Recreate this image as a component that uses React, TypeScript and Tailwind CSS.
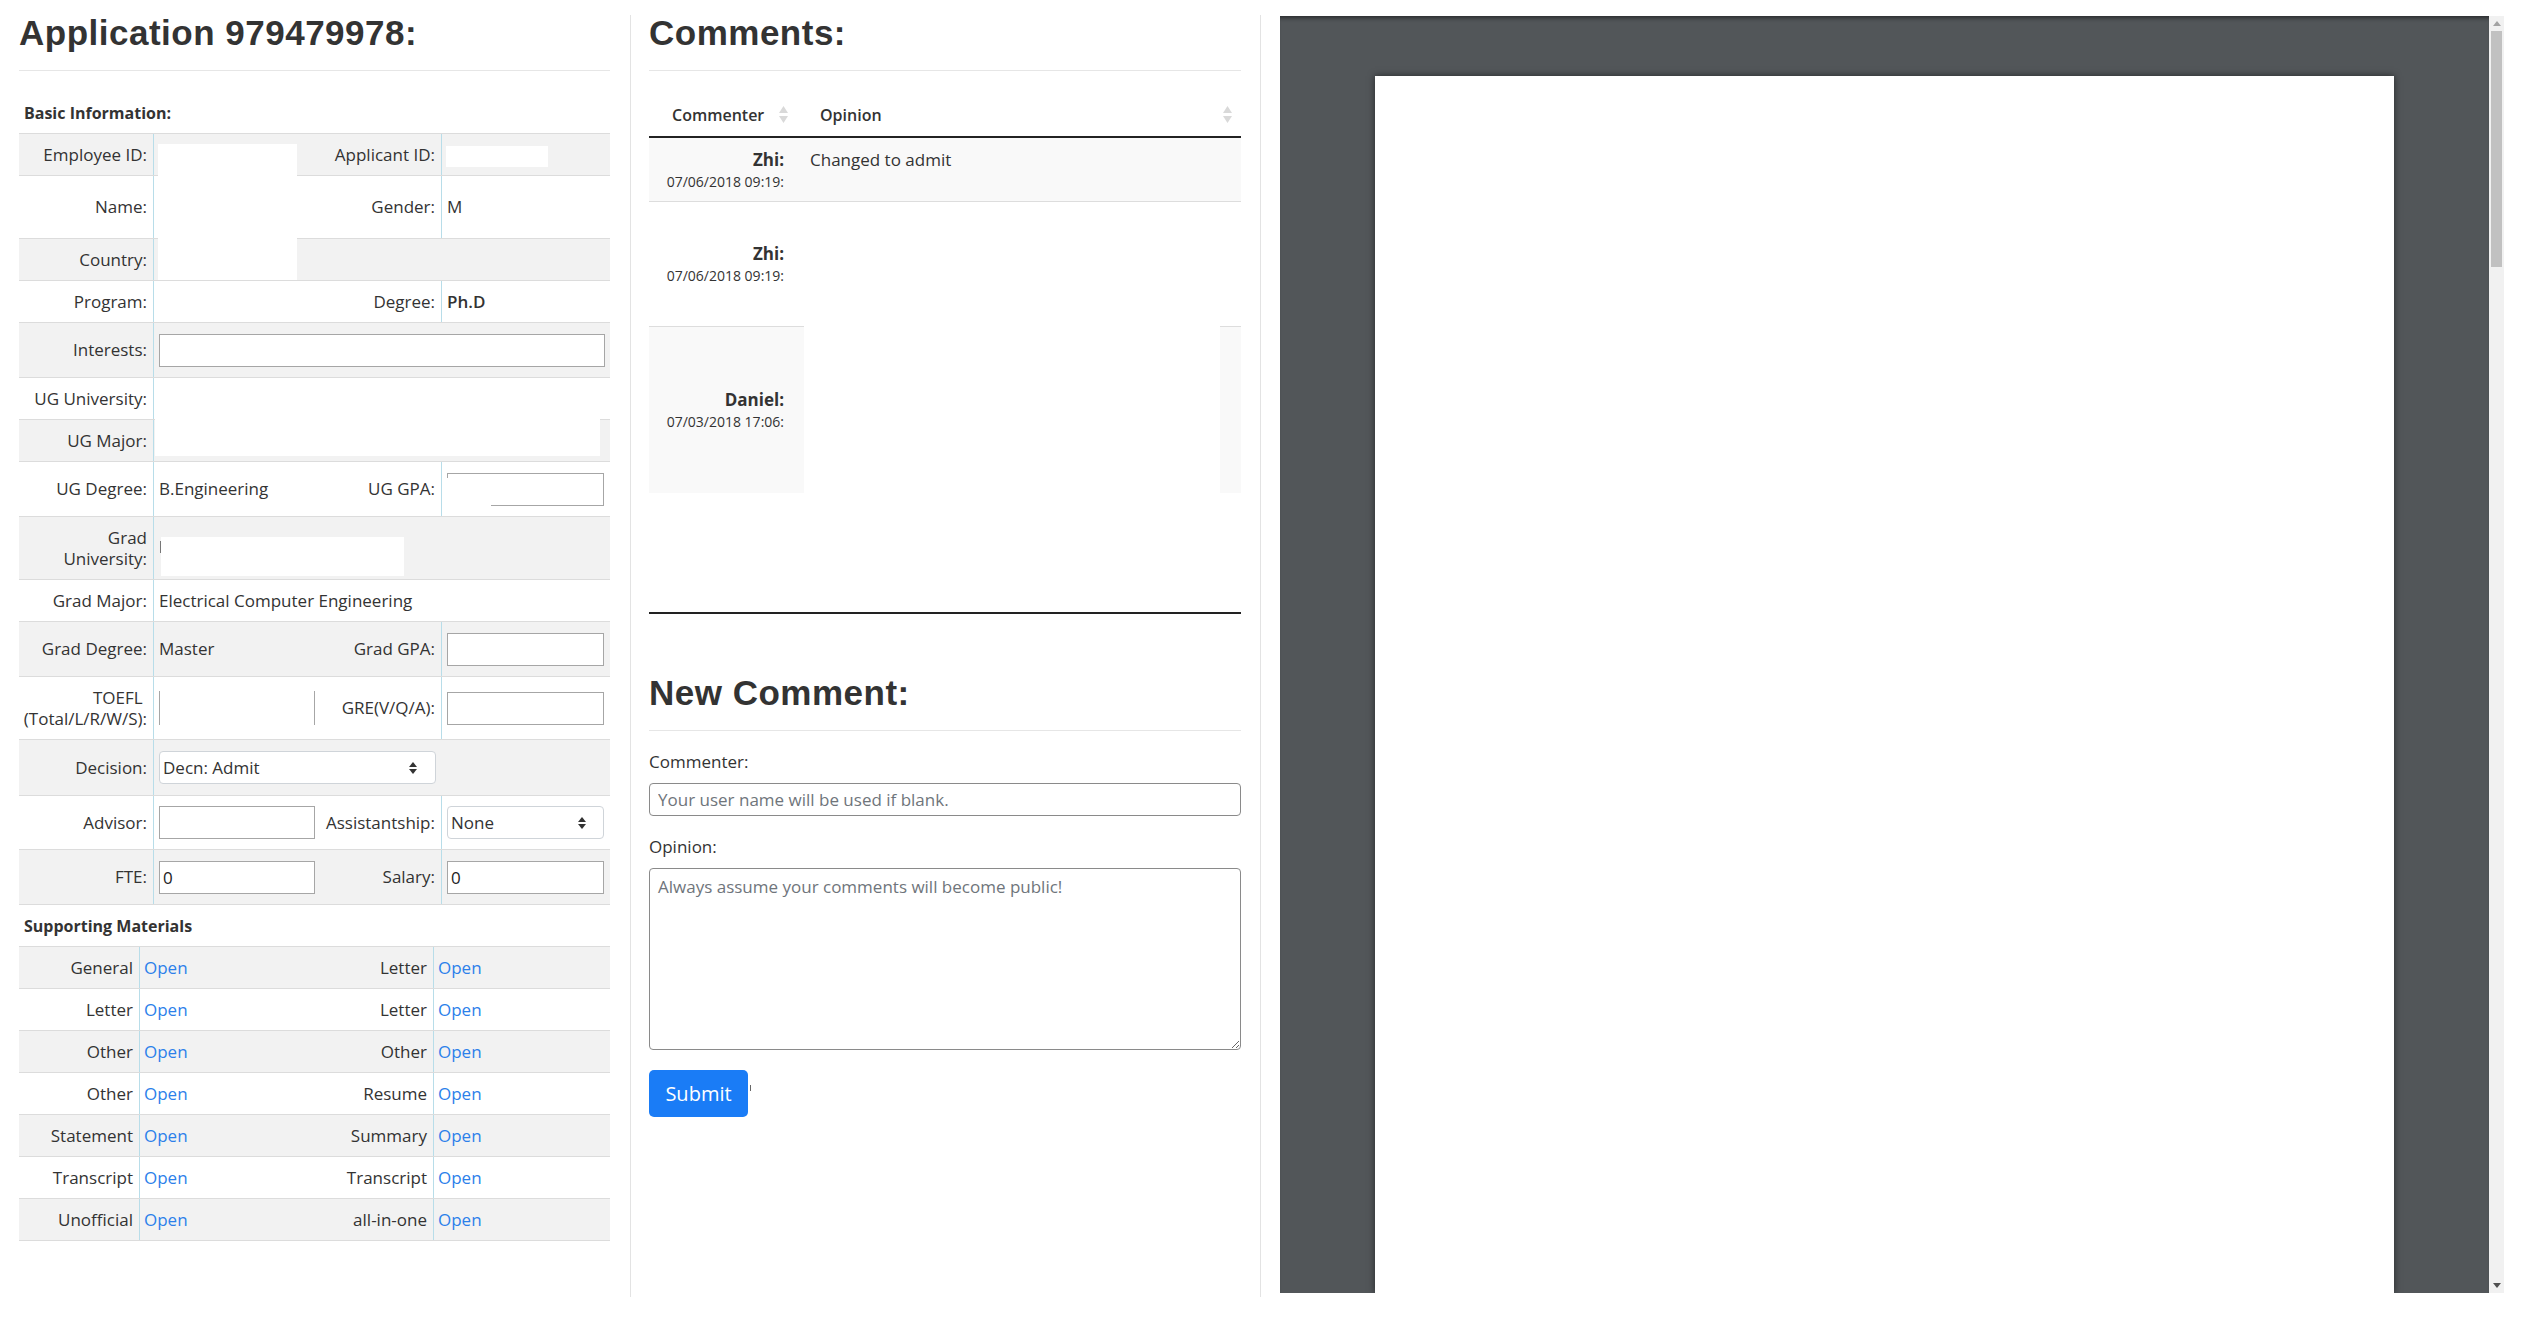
import clsx from "clsx";
import type { ReactNode } from "react";

// Application review screen — info table, comments, pdf preview

const infoCols = "grid grid-cols-[134px_169px_119px_169px] border-t border-[#dcdcdc]";
const docCols = "grid grid-cols-[120px_174px_120px_177px] border-t border-[#dcdcdc]";

function Row({ h, gray, last, cols = infoCols, children }: { h: string; gray?: boolean; last?: boolean; cols?: string; children: ReactNode }) {
  return <div className={clsx(cols, h, gray && "bg-[#f2f2f2]", last && "border-b")}>{children}</div>;
}

function Lbl({ children, two }: { children: ReactNode; two?: boolean }) {
  return (
    <div className={clsx("flex items-center justify-end pr-[6px] text-right", two && "leading-[21px]")}>
      <span>{children}</span>
    </div>
  );
}

function Val({ children, span }: { children?: ReactNode; span?: boolean }) {
  return <div className={clsx("flex items-center border-l border-[#b8dde9] pl-[5px]", span && "col-span-3")}>{children}</div>;
}

function Box({ w, value = "" }: { w: string; value?: string }) {
  return <input readOnly value={value} className={clsx("h-[33px] border border-[#a6a6a6] bg-white px-[3px] text-[17px] text-[#222] outline-none", w)} />;
}

function Arrows() {
  return (
    <svg width="8" height="12" viewBox="0 0 8 12" className="fill-[#333]">
      <path d="M0 5 L4 0 L8 5 Z" />
      <path d="M0 7 L4 12 L8 7 Z" />
    </svg>
  );
}

function Select({ w, value, pr }: { w: string; value: string; pr: string }) {
  return (
    <div className={clsx("flex h-[33px] items-center justify-between rounded-[4px] border border-[#cfd4d9] bg-white pl-[3px]", w, pr)}>
      <span>{value}</span>
      <Arrows />
    </div>
  );
}

function Doc({ name }: { name: string }) {
  return (
    <>
      <Lbl>{name}</Lbl>
      <div className="flex items-center border-l border-[#b8dde9] pl-[4px]">
        <a href="#" className="text-[#2c80ea]">Open</a>
      </div>
    </>
  );
}

function Title({ children, className }: { children: ReactNode; className?: string }) {
  return (
    <h1 className={clsx("font-['Liberation_Sans',Arial,sans-serif] text-[35px] font-bold leading-[36px] tracking-[0.5px] text-[#333]", className)}>
      {children}
    </h1>
  );
}

function ApplicationPanel() {
  return (
    <div className="mt-[15px] h-[1282px] w-[631px] shrink-0 border-r border-[#e3e3e3] pl-[19px] pr-[20px]">
      <Title>Application 979479978:</Title>
      <hr className="mt-[19px] border-t border-[#e6e6e6]" />
      <div className="mt-[30px] pl-[5px] text-[16px] font-bold">Basic Information:</div>

      <div className="relative mt-[8px]">
        <Row h="h-[42px]" gray>
          <Lbl>Employee ID:</Lbl>
          <Val />
          <Lbl>Applicant ID:</Lbl>
          <Val />
        </Row>
        <Row h="h-[63px]">
          <Lbl>Name:</Lbl>
          <Val />
          <Lbl>Gender:</Lbl>
          <Val>M</Val>
        </Row>
        <Row h="h-[42px]" gray>
          <Lbl>Country:</Lbl>
          <Val span />
        </Row>
        <Row h="h-[42px]">
          <Lbl>Program:</Lbl>
          <Val />
          <Lbl>Degree:</Lbl>
          <Val><span className="font-semibold">Ph.D</span></Val>
        </Row>
        <Row h="h-[55px]" gray>
          <Lbl>Interests:</Lbl>
          <Val span><Box w="w-[446px]" /></Val>
        </Row>
        <Row h="h-[42px]">
          <Lbl>UG University:</Lbl>
          <Val span />
        </Row>
        <Row h="h-[42px]" gray>
          <Lbl>UG Major:</Lbl>
          <Val span />
        </Row>
        <Row h="h-[55px]">
          <Lbl>UG Degree:</Lbl>
          <Val>B.Engineering</Val>
          <Lbl>UG GPA:</Lbl>
          <Val><Box w="w-[157px]" /></Val>
        </Row>
        <Row h="h-[63px]" gray>
          <Lbl two>Grad<br />University:</Lbl>
          <Val span />
        </Row>
        <Row h="h-[42px]">
          <Lbl>Grad Major:</Lbl>
          <Val span>Electrical Computer Engineering</Val>
        </Row>
        <Row h="h-[55px]" gray>
          <Lbl>Grad Degree:</Lbl>
          <Val>Master</Val>
          <Lbl>Grad GPA:</Lbl>
          <Val><Box w="w-[157px]" /></Val>
        </Row>
        <Row h="h-[63px]">
          <Lbl two>TOEFL{"\u00a0"}<br />(Total/L/R/W/S):</Lbl>
          <Val><div className="h-[34px] w-[156px] border-x border-[#a6a6a6]" /></Val>
          <Lbl>GRE(V/Q/A):</Lbl>
          <Val><Box w="w-[157px]" /></Val>
        </Row>
        <Row h="h-[56px]" gray>
          <Lbl>Decision:</Lbl>
          <Val span><Select w="w-[277px]" pr="pr-[18px]" value="Decn: Admit" /></Val>
        </Row>
        <Row h="h-[54px]">
          <Lbl>Advisor:</Lbl>
          <Val><Box w="w-[156px]" /></Val>
          <Lbl>Assistantship:</Lbl>
          <Val><Select w="w-[157px]" pr="pr-[17px]" value="None" /></Val>
        </Row>
        <Row h="h-[56px]" gray last>
          <Lbl>FTE:</Lbl>
          <Val><Box w="w-[156px]" value="0" /></Val>
          <Lbl>Salary:</Lbl>
          <Val><Box w="w-[157px]" value="0" /></Val>
        </Row>

        {/* redacted fields */}
        <div className="absolute left-[139px] top-[11px] h-[136px] w-[139px] bg-white" />
        <div className="absolute left-[427px] top-[13px] h-[21px] w-[102px] bg-white" />
        <div className="absolute left-[136px] top-[286px] h-[37px] w-[445px] bg-white" />
        <div className="absolute left-[428px] top-[345px] h-[28px] w-[44px] bg-white" />
        <div className="absolute left-[142px] top-[404px] h-[39px] w-[243px] bg-white" />
        <div className="absolute left-[141px] top-[408px] h-[12px] w-px bg-[#777]" />
      </div>

      <div className="mt-[9px] pl-[5px] text-[16px] font-bold">Supporting Materials</div>
      <div className="mt-[8px]">
        <Row h="h-[42px]" cols={docCols} gray><Doc name="General" /><Doc name="Letter" /></Row>
        <Row h="h-[42px]" cols={docCols}><Doc name="Letter" /><Doc name="Letter" /></Row>
        <Row h="h-[42px]" cols={docCols} gray><Doc name="Other" /><Doc name="Other" /></Row>
        <Row h="h-[42px]" cols={docCols}><Doc name="Other" /><Doc name="Resume" /></Row>
        <Row h="h-[42px]" cols={docCols} gray><Doc name="Statement" /><Doc name="Summary" /></Row>
        <Row h="h-[42px]" cols={docCols}><Doc name="Transcript" /><Doc name="Transcript" /></Row>
        <Row h="h-[43px]" cols={docCols} gray last><Doc name="Unofficial" /><Doc name="all-in-one" /></Row>
      </div>
    </div>
  );
}

function SortIcon() {
  return (
    <svg width="9" height="17" viewBox="0 0 9 17" className="fill-[#d9d9d9]">
      <path d="M0 7 L4.5 0 L9 7 Z" />
      <path d="M0 10 L4.5 17 L9 10 Z" />
    </svg>
  );
}

function Who({ name, date }: { name: string; date: string }) {
  return (
    <div className="flex flex-col items-end">
      <span className="font-bold leading-[24px]">{name}</span>
      <span className="text-[14px] leading-[20px]">{date}</span>
    </div>
  );
}

function CommentsPanel() {
  return (
    <div className="mt-[15px] h-[1282px] w-[630px] shrink-0 border-r border-[#e3e3e3] pl-[18px] pr-[19px]">
      <Title>Comments:</Title>
      <hr className="mt-[19px] border-t border-[#e6e6e6]" />

      <div className="mt-[22px] flex h-[45px] border-b-2 border-[#222] text-[16px] font-semibold">
        <div className="flex w-[155px] items-center justify-between pl-[23px] pr-[16px]">
          <span>Commenter</span>
          <SortIcon />
        </div>
        <div className="flex flex-1 items-center justify-between pl-[16px] pr-[9px]">
          <span>Opinion</span>
          <SortIcon />
        </div>
      </div>

      <div className="flex h-[64px] border-b border-[#dddddd] bg-[#f9f9f9]">
        <div className="flex w-[155px] items-center justify-end pr-[20px]">
          <Who name="Zhi:" date="07/06/2018 09:19:" />
        </div>
        <div className="flex-1 pl-[6px] pt-[10px]">Changed to admit</div>
      </div>
      <div className="flex h-[124px]">
        <div className="flex w-[155px] items-center justify-end pr-[20px]">
          <Who name="Zhi:" date="07/06/2018 09:19:" />
        </div>
      </div>
      <div className="flex h-[167px]">
        <div className="flex w-[155px] items-center justify-end border-t border-[#dddddd] bg-[#f9f9f9] pr-[20px]">
          <Who name="Daniel:" date="07/03/2018 17:06:" />
        </div>
        <div className="flex-1 bg-white" />
        <div className="w-[21px] border-t border-[#dddddd] bg-[#f9f9f9]" />
      </div>
      <div className="h-[121px] border-b-2 border-[#222]" />

      <Title className="mt-[61px]">New Comment:</Title>
      <hr className="mt-[19px] border-t border-[#e6e6e6]" />
      <div className="mt-[19px]">Commenter:</div>
      <input
        className="mt-[9px] block h-[33px] w-full rounded-[4px] border border-[#8a8a8a] px-[8px] text-[17px] outline-none placeholder:text-[#6f757b]"
        placeholder="Your user name will be used if blank."
      />
      <div className="mt-[19px]">Opinion:</div>
      <textarea
        className="mt-[9px] block h-[182px] w-full rounded-[4px] border border-[#8a8a8a] px-[8px] pt-[6px] text-[17px] outline-none placeholder:text-[#6f757b]"
        placeholder="Always assume your comments will become public!"
      />
      <div className="mt-[20px] flex items-start">
        <button className="h-[47px] w-[99px] rounded-[5px] bg-[#1a7cf6] text-[20px] text-white">Submit</button>
        <span className="ml-[2px] mt-[15px] h-[6px] w-px bg-[#666]" />
      </div>
    </div>
  );
}

function PdfViewer() {
  return (
    <div className="ml-[19px] mt-[16px] flex h-[1277px] w-[1224px]">
      <div className="flex flex-1 justify-center overflow-hidden bg-[#525659] pt-[60px] shadow-[inset_0_5px_4px_-3px_rgba(0,0,0,0.5)]">
        <div className="h-full w-[1019px] bg-white shadow-[0_0_7px_rgba(0,0,0,0.55)]" />
      </div>
      <div className="flex w-[15px] flex-col bg-[#f1f1f1]">
        <div className="flex h-[15px] items-center justify-center">
          <svg width="8" height="5" viewBox="0 0 8 5" className="fill-[#a3a3a3]"><path d="M0 5 L4 0 L8 5 Z" /></svg>
        </div>
        <div className="mx-[2px] h-[236px] bg-[#c1c1c1]" />
        <div className="flex-1" />
        <div className="flex h-[15px] items-center justify-center">
          <svg width="8" height="5" viewBox="0 0 8 5" className="fill-[#505050]"><path d="M0 0 L4 5 L8 0 Z" /></svg>
        </div>
      </div>
    </div>
  );
}

export default function App() {
  return (
    <div className="flex h-[1324px] w-[2525px] bg-white font-['Open_Sans',sans-serif] text-[17px] leading-[24px] text-[#333]">
      <ApplicationPanel />
      <CommentsPanel />
      <PdfViewer />
    </div>
  );
}
